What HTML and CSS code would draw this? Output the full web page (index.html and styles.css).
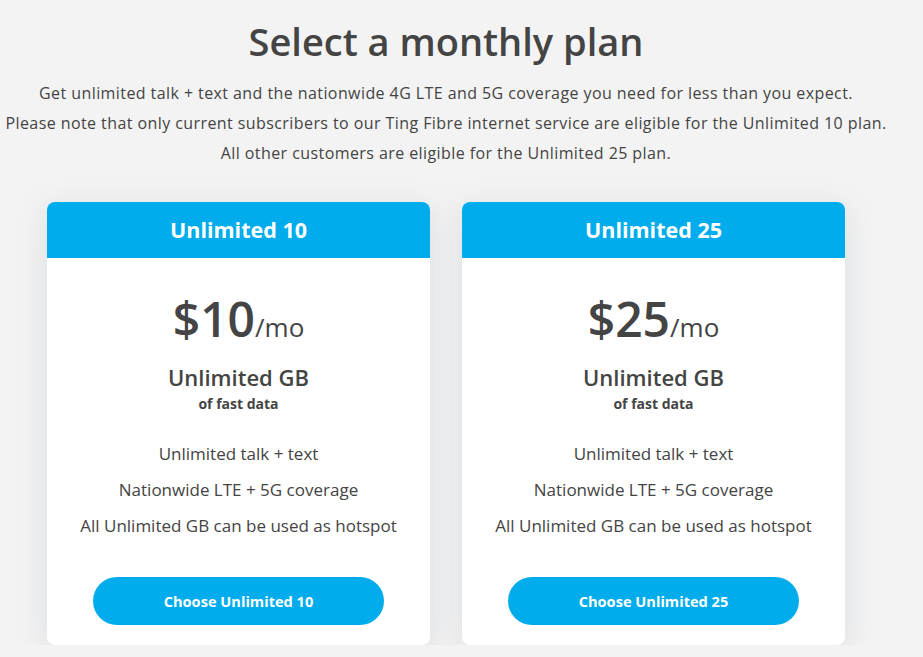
FILE: index.html
```html
<!DOCTYPE html>
<html lang="en">
<head>
<meta charset="utf-8">
<title>Select a monthly plan</title>
<link rel="stylesheet" href="styles.css">
</head>
<body>
<main class="page">
  <h1 class="title">Select a monthly plan</h1>
  <div class="intro">
    <p>Get unlimited talk + text and the nationwide 4G LTE and 5G coverage you need for less than you expect.</p>
    <p>Please note that only current subscribers to our Ting Fibre internet service are eligible for the Unlimited 10 plan.</p>
    <p>All other customers are eligible for the Unlimited 25 plan.</p>
  </div>
  <div class="plans">
    <section class="card">
      <header class="card-head">Unlimited 10</header>
      <div class="card-body">
        <div class="price"><span class="amount">$10</span><span class="per">/mo</span></div>
        <div class="data">Unlimited GB</div>
        <div class="data-sub">of fast data</div>
        <ul class="features">
          <li>Unlimited talk + text</li>
          <li>Nationwide LTE + 5G coverage</li>
          <li>All Unlimited GB can be used as hotspot</li>
        </ul>
        <button class="choose">Choose Unlimited 10</button>
      </div>
    </section>
    <section class="card">
      <header class="card-head">Unlimited 25</header>
      <div class="card-body">
        <div class="price"><span class="amount">$25</span><span class="per">/mo</span></div>
        <div class="data">Unlimited GB</div>
        <div class="data-sub">of fast data</div>
        <ul class="features">
          <li>Unlimited talk + text</li>
          <li>Nationwide LTE + 5G coverage</li>
          <li>All Unlimited GB can be used as hotspot</li>
        </ul>
        <button class="choose">Choose Unlimited 25</button>
      </div>
    </section>
  </div>
</main>
</body>
</html>
```

FILE: styles.css
```css
html, body {
  margin: 0;
  padding: 0;
  background: #f3f3f3;
}
body {
  font-family: "Open Sans", "Liberation Sans", sans-serif;
  color: #444;
}
.page {
  width: 892px;
  text-align: center;
}
.title {
  margin: 16px 0 0;
  font-size: 38px;
  line-height: 50px;
  font-weight: 600;
  color: #444;
}
.intro {
  margin-top: 12px;
}
.intro p {
  margin: 0;
  font-size: 16px;
  line-height: 30px;
  letter-spacing: 0.42px;
  color: #444;
}
.plans {
  display: flex;
  justify-content: center;
  gap: 32px;
  margin-top: 34px;
}
.card {
  width: 383px;
  background: #fff;
  border-radius: 8px;
  overflow: hidden;
  box-shadow: 0 6px 30px rgba(150, 160, 170, 0.25);
}
.card-head {
  background: #00acec;
  color: #fff;
  height: 56px;
  line-height: 56px;
  font-size: 21.5px;
  font-weight: 700;
}
.card-body {
  padding: 33px 0 20px;
}
.price {
  height: 56px;
  line-height: 56px;
}
.amount {
  font-size: 48px;
  font-weight: 600;
}
.per {
  font-size: 26px;
  font-weight: 500;
}
.data {
  margin-top: 16px;
  font-size: 22px;
  line-height: 28px;
  font-weight: 600;
}
.data-sub {
  margin-top: 4px;
  font-size: 14px;
  line-height: 18px;
  font-weight: 700;
}
.features {
  list-style: none;
  margin: 23px 0 0;
  padding: 0;
}
.features li {
  font-size: 17px;
  line-height: 36px;
}
.choose {
  display: block;
  margin: 33px auto 0;
  width: 291px;
  height: 48px;
  border: none;
  border-radius: 24px;
  background: #00acec;
  color: #fff;
  font-family: inherit;
  font-size: 14.6px;
  font-weight: 700;
}
```
